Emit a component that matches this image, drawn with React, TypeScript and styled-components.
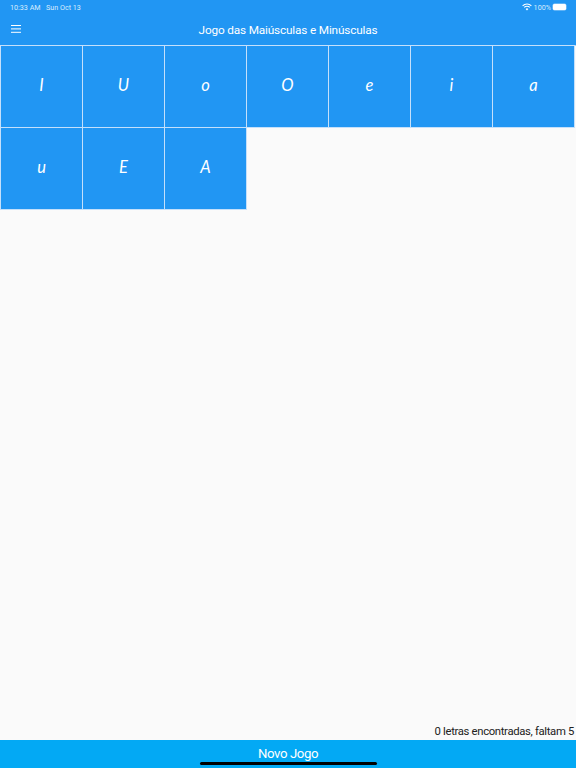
import React, { ReactElement } from 'react';
import styled, { createGlobalStyle } from 'styled-components';

const LETTERS = ['I', 'U', 'o', 'O', 'e', 'i', 'a', 'u', 'E', 'A'];

const GlobalStyle = createGlobalStyle`
    html, body {
        margin: 0;
        padding: 0;
        background: #fafafa;
    }
    #root {
        height: 768px;
    }
`;

const App: React.FC = (): ReactElement => {
    return (
        <Page>
            <GlobalStyle />
            <AppBar>
                <StatusBar>
                    <StatusText>10:33 AM&nbsp;&nbsp; Sun Oct 13</StatusText>
                    <StatusRight>
                        <svg width='10' height='8' viewBox='0 0 10 8' fill='none' stroke='#fff'>
                            <path d='M0.6 2.8a6.2 6.2 0 0 1 8.8 0' strokeWidth='1.1' />
                            <path d='M2.2 4.4a3.9 3.9 0 0 1 5.6 0' strokeWidth='1.1' />
                            <path d='M5 7.6L3.6 6a2 2 0 0 1 2.8 0z' fill='#fff' stroke='none' />
                        </svg>
                        <StatusText>100%</StatusText>
                        <Battery />
                    </StatusRight>
                </StatusBar>
                <TitleRow>
                    <MenuButton>
                        <svg width='12' height='10' viewBox='0 0 12 10' fill='#fff'>
                            <rect x='1' y='1' width='10' height='1' />
                            <rect x='1' y='4.4' width='10' height='1' />
                            <rect x='1' y='7.8' width='10' height='1' />
                        </svg>
                    </MenuButton>
                    <Title>Jogo das Maiúsculas e Minúsculas</Title>
                </TitleRow>
            </AppBar>
            <Board>
                {LETTERS.map((letter, index) => (
                    <Tile key={index}>{letter}</Tile>
                ))}
            </Board>
            <Score>0 letras encontradas, faltam 5</Score>
            <NewGameButton>
                Novo Jogo
                <HomeIndicator />
            </NewGameButton>
        </Page>
    );
};

export default App;

const Page = styled.div`
    display: flex;
    flex-direction: column;
    height: 768px;
    background: #fafafa;
    font-family: Roboto, 'Liberation Sans', sans-serif;
    overflow: hidden;
`;

const AppBar = styled.header`
    flex: none;
    height: 45px;
    background: #2196f3;
    color: #fff;
    border-bottom: 1px solid #a6d2f8;
`;

const StatusBar = styled.div`
    display: flex;
    align-items: center;
    justify-content: space-between;
    height: 14px;
    padding: 0 10px 0 10px;
`;

const StatusText = styled.span`
    font-size: 7.2px;
    color: #d8ecfd;
`;

const StatusRight = styled.div`
    display: flex;
    align-items: center;
    gap: 2px;
`;

const Battery = styled.div`
    width: 13px;
    height: 6px;
    border-radius: 1.5px;
    background: #fff;
    box-shadow: 0 0 0 0.5px #a6d2f8;
`;

const TitleRow = styled.div`
    position: relative;
    display: flex;
    align-items: center;
    justify-content: center;
    height: 31px;
`;

const MenuButton = styled.div`
    position: absolute;
    left: 10px;
    top: 10px;
    display: flex;
`;

const Title = styled.h1`
    margin: 0;
    font-size: 11.8px;
    font-weight: 400;
    letter-spacing: -0.17px;
    color: #fff;
`;

const Board = styled.main`
    flex: 1;
    display: grid;
    grid-template-columns: repeat(7, 81px);
    grid-auto-rows: 81px;
    gap: 1px;
    align-content: start;
    padding: 0 1px;
`;

const Tile = styled.div`
    display: flex;
    align-items: center;
    justify-content: center;
    padding-bottom: 3px;
    box-sizing: border-box;
    background: #2196f3;
    box-shadow: 0 0 0 1px #c4e0fb;
    color: #fff;
    font-family: Lato, sans-serif;
    font-size: 16.5px;
    font-style: italic;
`;

const Score = styled.div`
    flex: none;
    text-align: right;
    padding: 0 2px 0 0;
    height: 17px;
    line-height: 17px;
    font-size: 11.3px;
    letter-spacing: -0.33px;
    color: #212121;
`;

const NewGameButton = styled.div`
    flex: none;
    position: relative;
    height: 28px;
    padding-top: 6px;
    box-sizing: border-box;
    text-align: center;
    background: #03a9f4;
    color: #fff;
    font-size: 13.2px;
    letter-spacing: -0.4px;
`;

const HomeIndicator = styled.div`
    position: absolute;
    left: 200px;
    bottom: 3px;
    width: 177px;
    height: 3px;
    border-radius: 2px;
    background: #000;
`;
